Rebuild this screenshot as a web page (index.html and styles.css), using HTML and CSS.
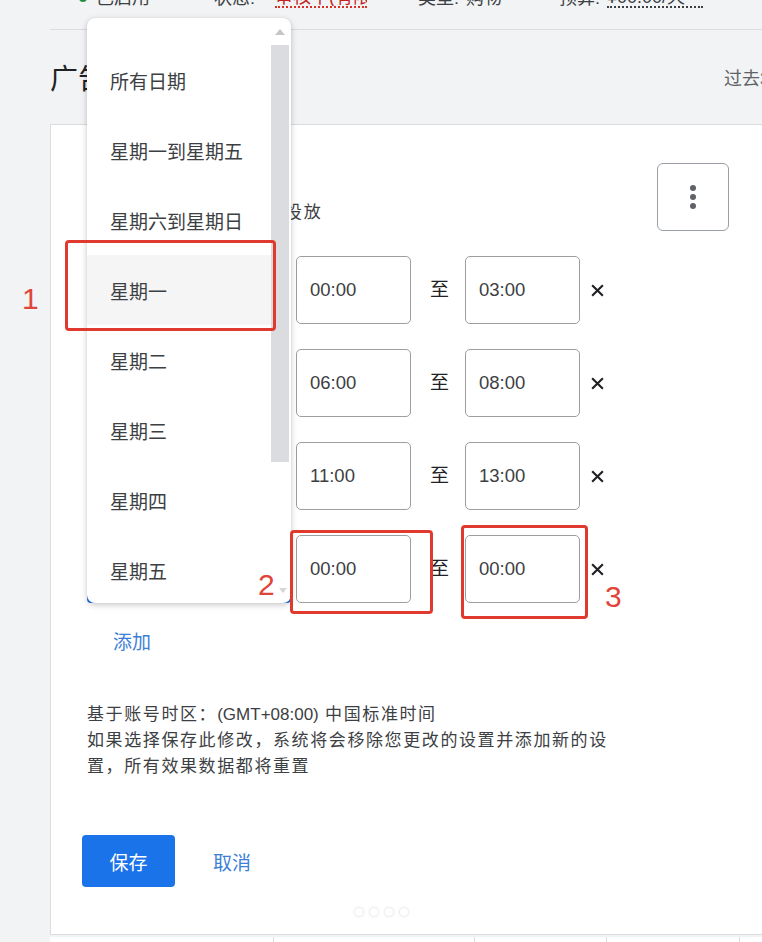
FILE: index.html
```html
<!DOCTYPE html>
<html lang="zh-CN">
<head>
<meta charset="utf-8">
<title>广告投放时间</title>
<link rel="stylesheet" href="styles.css">
</head>
<body>
<div class="page">
  <div class="topbar">
    <div class="status-row">
      <span class="dot-green"></span>
      <span class="st st-1">已启用</span>
      <span class="st st-2">状态:</span>
      <span class="st st-3">审核中(有限)</span>
      <span class="st st-4">类型:</span>
      <span class="st st-5">购物</span>
      <span class="st st-6">预算:</span>
      <span class="st st-7">¥00.00/天</span>
    </div>
  </div>

  <div class="title-row">
    <h1 class="title">广告投放时间</h1>
    <span class="range">过去30天</span>
  </div>

  <section class="card">
    <div class="card-head">
      <span class="label">选择在哪些日期和时段投放</span>
      <button class="kebab" aria-label="更多"><span></span><span></span><span></span></button>
    </div>

    <div class="rows">
      <div class="row">
        <div class="select" aria-label="星期一"></div>
        <div class="time">00:00</div>
        <span class="to">至</span>
        <div class="time">03:00</div>
        <svg class="x" viewBox="0 0 14 14"><path d="M2 2L12 12M12 2L2 12"/></svg>
      </div>
      <div class="row">
        <div class="select" aria-label="星期一"></div>
        <div class="time">06:00</div>
        <span class="to">至</span>
        <div class="time">08:00</div>
        <svg class="x" viewBox="0 0 14 14"><path d="M2 2L12 12M12 2L2 12"/></svg>
      </div>
      <div class="row">
        <div class="select" aria-label="星期一"></div>
        <div class="time">11:00</div>
        <span class="to">至</span>
        <div class="time">13:00</div>
        <svg class="x" viewBox="0 0 14 14"><path d="M2 2L12 12M12 2L2 12"/></svg>
      </div>
      <div class="row">
        <div class="select select-focus" aria-label="所有日期"></div>
        <div class="time">00:00</div>
        <span class="to">至</span>
        <div class="time">00:00</div>
        <svg class="x" viewBox="0 0 14 14"><path d="M2 2L12 12M12 2L2 12"/></svg>
      </div>
    </div>

    <a class="add">添加</a>

    <p class="info">基于账号时区：<span class="latin">(GMT+08:00)</span> 中国标准时间<br>如果选择保存此修改，系统将会移除您更改的设置并添加新的设<br>置，所有效果数据都将重置</p>

    <div class="actions">
      <button class="save">保存</button>
      <button class="cancel">取消</button>
    </div>

    <div class="dots"><i></i><i></i><i></i><i></i></div>
  </section>

  <div class="table-row">
    <div class="cell w1"></div>
    <div class="cell w2"></div>
    <div class="cell w3"></div>
    <div class="cell w4"></div>
    <div class="cell w5"></div>
  </div>

  <div class="dropdown">
    <ul class="menu">
      <li>所有日期</li>
      <li>星期一到星期五</li>
      <li>星期六到星期日</li>
      <li class="hover">星期一</li>
      <li>星期二</li>
      <li>星期三</li>
      <li>星期四</li>
      <li>星期五</li>
    </ul>
    <div class="scrollbar">
      <span class="arrow-up"></span>
      <span class="thumb"></span>
      <span class="arrow-down"></span>
    </div>
  </div>

  <div class="mark mark-1"></div>
  <div class="mark mark-2"></div>
  <div class="mark mark-3"></div>
  <span class="num num-1">1</span>
  <span class="num num-2">2</span>
  <span class="num num-3">3</span>
</div>
</body>
</html>
```

FILE: styles.css
```css
* { box-sizing: border-box; }

body {
  margin: 0;
  background: #f1f3f4;
  font-family: "Liberation Sans", "Noto Sans CJK SC", sans-serif;
  color: #3c4043;
}

.page {
  position: relative;
  width: 762px;
  height: 942px;
  overflow: hidden;
}

/* top status strip (cut off at top) */
.topbar {
  display: flex;
  margin-left: 50px;
  height: 30px;
  border-bottom: 1px solid #dadce0;
}
.status-row {
  display: flex;
  align-items: center;
  margin-top: -12px;
  height: 20px;
  font-size: 18px;
  line-height: 20px;
  white-space: nowrap;
}
.dot-green {
  width: 8px;
  height: 8px;
  border-radius: 50%;
  background: #1e8e3e;
  margin-left: 29px;
}
.st { display: inline-block; }
.st-1 { margin-left: 9px; width: 60px; }
.st-2 { margin-left: 58px; width: 44px; }
.st-3 { margin-left: 17px; width: 92px; color: #c5221f; border-bottom: 2px dotted #d93025; line-height: 18px; overflow: hidden; }
.st-4 { margin-left: 51px; width: 48px; }
.st-5 { width: 50px; }
.st-6 { margin-left: 43px; width: 48px; }
.st-7 { width: 96px; border-bottom: 2px dotted #3c4043; line-height: 18px; }

/* title */
.title-row {
  display: flex;
  align-items: center;
  justify-content: space-between;
  margin-left: 50px;
  height: 94px;
}
.title {
  margin: 0;
  font-size: 28px;
  font-weight: 400;
  color: #202124;
}
.range {
  flex: none;
  font-size: 18px;
  color: #5f6368;
  margin-right: -36px;
  white-space: nowrap;
}

/* card */
.card {
  margin-left: 50px;
  background: #fff;
  border: 1px solid #dadce0;
  border-right: none;
  padding: 38px 0 18px 36px;
}
.card-head {
  display: flex;
  align-items: flex-end;
  justify-content: space-between;
  height: 68px;
  padding-right: 33px;
}
.label {
  margin-left: 10px;
  margin-bottom: 7px;
  font-size: 17px;
  letter-spacing: 1.8px;
  line-height: 22px;
  color: #3c4043;
}
.kebab {
  width: 72px;
  height: 68px;
  border: 1px solid #9aa0a6;
  border-radius: 6px;
  background: #fff;
  display: flex;
  flex-direction: column;
  align-items: center;
  justify-content: center;
  gap: 3px;
  padding: 0;
}
.kebab span {
  width: 6px;
  height: 6px;
  border-radius: 50%;
  background: #5f6368;
}

.rows {
  margin-top: 25px;
  display: flex;
  flex-direction: column;
  gap: 25px;
}
.row {
  display: flex;
  align-items: center;
  height: 68px;
}
.select {
  flex: none;
  width: 204px;
  height: 68px;
  border: 1px solid #9aa0a6;
  border-radius: 4px;
}
.select-focus { border: 2px solid #1a73e8; }
.time {
  flex: none;
  margin-left: 5px;
  width: 115px;
  height: 68px;
  border: 1px solid #9e9e9e;
  border-radius: 5px;
  display: flex;
  align-items: center;
  padding-left: 13px;
  font-size: 18.5px;
  color: #3c4043;
}
.to {
  flex: none;
  min-width: 0;
  margin-left: 19px;
  margin-right: 12px;
  width: 18px;
  font-size: 19px;
  line-height: 24px;
  color: #202124;
}
.x {
  flex: none;
  margin-left: 10px;
  width: 15px;
  height: 15px;
  fill: none;
  stroke: #202124;
  stroke-width: 2;
}

.add {
  display: block;
  margin-top: 28px;
  margin-left: 26px;
  font-size: 19px;
  line-height: 24px;
  color: #3d7fd6;
}

.info {
  margin: 47px 0 0 0;
  font-size: 17px;
  letter-spacing: 1.6px;
  line-height: 26px;
  color: #3c4043;
}
.info .latin { letter-spacing: 0; }

.actions {
  display: flex;
  align-items: center;
  margin-top: 55px;
  margin-left: -5px;
}
.save {
  width: 93px;
  height: 52px;
  border: none;
  border-radius: 4px;
  background: #1a73e8;
  color: #fff;
  font-family: "Liberation Sans", "Noto Sans CJK SC", sans-serif;
  font-size: 19px;
  padding: 0;
}
.cancel {
  margin-left: 38px;
  border: none;
  background: none;
  padding: 0;
  color: #3d7fd6;
  font-family: "Liberation Sans", "Noto Sans CJK SC", sans-serif;
  font-size: 19px;
}

.dots {
  display: flex;
  gap: 7px;
  margin-top: 21px;
  margin-left: 268px;
  height: 8px;
}
.dots i {
  width: 8px;
  height: 8px;
  border-radius: 50%;
  background: #fff;
  box-shadow: 0 0 3px rgba(0, 0, 0, 0.2);
}

/* table strip at bottom */
.table-row {
  display: flex;
  margin-left: 50px;
  margin-top: 2px;
  height: 20px;
}
.cell {
  background: #fff;
  border-right: 1px solid #dadce0;
}
.w1 { width: 224px; }
.w2 { width: 201px; }
.w3 { width: 132px; }
.w4 { width: 133px; }
.w5 { flex: 1; border-right: none; }

/* dropdown overlay */
.dropdown {
  position: absolute;
  left: 87px;
  top: 18px;
  width: 204px;
  height: 585px;
  background: #fff;
  border-radius: 8px;
  box-shadow: 0 2px 6px rgba(0, 0, 0, 0.22), 0 0 1px rgba(0, 0, 0, 0.15);
  overflow: hidden;
  display: flex;
}
.menu {
  list-style: none;
  margin: 0;
  padding: 27px 0 0 0;
  flex: 1;
}
.menu li {
  height: 70px;
  display: flex;
  align-items: center;
  padding-left: 23px;
  font-size: 19px;
  color: #3c4043;
  white-space: nowrap;
}
.menu li.hover { background: #f5f5f5; }
.scrollbar {
  width: 18px;
  margin-right: 2px;
  display: flex;
  flex-direction: column;
  align-items: center;
}
.arrow-up {
  margin-top: 11px;
  width: 0;
  height: 0;
  border-left: 5px solid transparent;
  border-right: 5px solid transparent;
  border-bottom: 6px solid #c4c7c9;
}
.thumb {
  margin-top: 10px;
  width: 18px;
  height: 417px;
  background: #dadce0;
}
.arrow-down {
  margin-top: auto;
  margin-bottom: 10px;
  margin-left: 6px;
  width: 0;
  height: 0;
  border-left: 4px solid transparent;
  border-right: 4px solid transparent;
  border-top: 5px solid #d4d6d8;
}

/* red annotations */
.mark {
  position: absolute;
  border: 3px solid #e0392e;
  border-radius: 4px;
}
.mark-1 { left: 65px; top: 240px; width: 211px; height: 91px; }
.mark-2 { left: 290px; top: 530px; width: 143px; height: 84px; }
.mark-3 { left: 461px; top: 525px; width: 127px; height: 94px; }
.num {
  position: absolute;
  font-family: "Liberation Sans", sans-serif;
  font-size: 30px;
  line-height: 30px;
  color: #e0453a;
}
.num-1 { left: 22px; top: 284px; }
.num-2 { left: 258px; top: 570px; }
.num-3 { left: 605px; top: 582px; }
```
